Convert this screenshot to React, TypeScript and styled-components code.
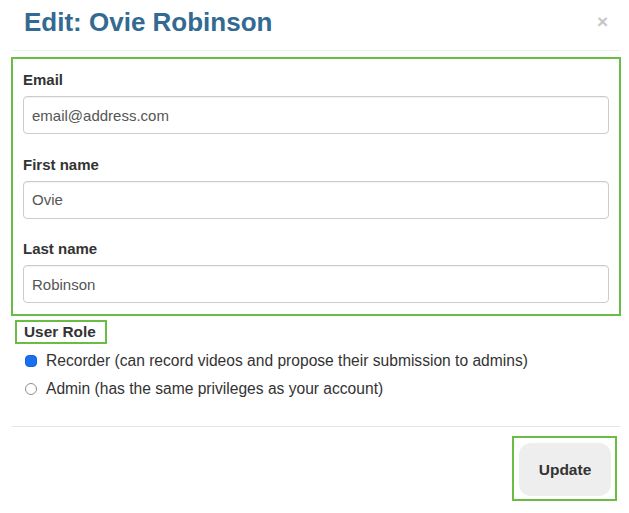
import React from "react";
import styled, { createGlobalStyle } from "styled-components";

const Global = createGlobalStyle`
  html, body { margin: 0; padding: 0; background: #fff; }
  body { font-family: "Liberation Sans", Arial, Helvetica, sans-serif; color: #333; }
  * { box-sizing: border-box; }
`;

const Modal = styled.div`
  width: 629px;
  height: 513px;
  background: #fff;
  display: flex;
  flex-direction: column;
`;

const Header = styled.div`
  height: 51px;
  margin: 0 9px 0 12px;
  padding: 8px 12px 0 12px;
  border-bottom: 1px solid #eeeeee;
  display: flex;
  justify-content: space-between;
  align-items: flex-start;
`;

const Title = styled.h2`
  margin: 0;
  font-size: 26px;
  line-height: 29px;
  font-weight: 700;
  color: #336a91;
`;

const Close = styled.button`
  border: 0;
  background: none;
  padding: 0;
  margin-top: 4px;
  font-family: "Liberation Sans", Arial, sans-serif;
  font-size: 19px;
  line-height: 20px;
  font-weight: 700;
  color: #c6c6c6;
  cursor: pointer;
`;

const Highlight = styled.div`
  border: 2px solid #69bd45;
`;

const FieldBox = styled(Highlight)`
  margin: 6px 8px 0 11px;
  padding: 12px 10px 11px;
  display: flex;
  flex-direction: column;
  gap: 21.5px;
`;

const Field = styled.div`
  display: flex;
  flex-direction: column;
`;

const Label = styled.label`
  font-size: 15px;
  line-height: 18px;
  font-weight: 700;
  color: #333;
  margin-bottom: 7px;
`;

const Input = styled.input`
  height: 38px;
  width: 100%;
  border: 1px solid #cccccc;
  border-radius: 4px;
  padding: 0 8px;
  font-family: "Liberation Sans", Arial, sans-serif;
  font-size: 15px;
  color: #555;
  background: #fff;
  box-shadow: inset 0 1px 1px rgba(0, 0, 0, 0.06);
  outline: none;
`;

const RoleBox = styled(Highlight)`
  align-self: flex-start;
  margin: 4px 0 0 15px;
  padding: 0 9px 0 7px;
  height: 24px;
  font-size: 15.4px;
  line-height: 20px;
  font-weight: 700;
  color: #333;
`;

const RadioList = styled.div`
  margin: 3px 0 23px 25px;
  display: flex;
  flex-direction: column;
`;

const RadioRow = styled.label`
  height: 28px;
  display: flex;
  align-items: center;
  gap: 9px;
  font-size: 15.6px;
  color: #333;
`;

const Radio = styled.span<{ $checked?: boolean }>`
  width: 12px;
  height: 12px;
  border-radius: ${(p) => (p.$checked ? "4px" : "50%")};
  flex: none;
  background: ${(p) => (p.$checked ? "#1a6ff0" : "#fff")};
  border: 1px solid ${(p) => (p.$checked ? "#1463d8" : "#8f8f8f")};
`;

const Footer = styled.div`
  margin: 0 9px 0 12px;
  padding: 9px 3px 0 0;
  border-top: 1px solid #e6e6e6;
  display: flex;
  justify-content: flex-end;
`;

const ButtonFrame = styled(Highlight)`
  padding: 5px 4px 3px 5px;
`;

const Button = styled.button`
  width: 92px;
  height: 53px;
  border: 0;
  border-radius: 12px;
  background: #eeeeee;
  font-family: "Liberation Sans", Arial, sans-serif;
  font-size: 15.5px;
  font-weight: 700;
  color: #333;
  cursor: pointer;
`;

export default function App() {
  return (
    <>
      <Global />
      <Modal>
        <Header>
          <Title>Edit: Ovie Robinson</Title>
          <Close aria-label="Close">×</Close>
        </Header>
        <FieldBox>
          <Field>
            <Label>Email</Label>
            <Input defaultValue="email@address.com" />
          </Field>
          <Field>
            <Label>First name</Label>
            <Input defaultValue="Ovie" />
          </Field>
          <Field>
            <Label>Last name</Label>
            <Input defaultValue="Robinson" />
          </Field>
        </FieldBox>
        <RoleBox>User Role</RoleBox>
        <RadioList>
          <RadioRow>
            <Radio $checked />
            Recorder (can record videos and propose their submission to admins)
          </RadioRow>
          <RadioRow>
            <Radio />
            Admin (has the same privileges as your account)
          </RadioRow>
        </RadioList>
        <Footer>
          <ButtonFrame>
            <Button>Update</Button>
          </ButtonFrame>
        </Footer>
      </Modal>
    </>
  );
}
